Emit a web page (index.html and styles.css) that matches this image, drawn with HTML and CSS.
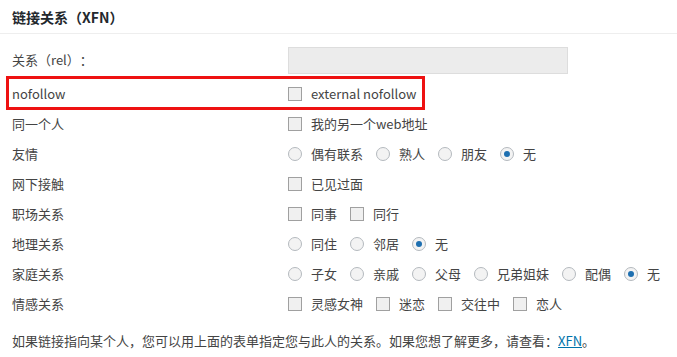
FILE: index.html
```html
<!DOCTYPE html>
<html lang="zh-CN">
<head>
<meta charset="utf-8">
<title>链接关系（XFN）</title>
<link rel="stylesheet" href="styles.css">
</head>
<body>
<div class="box">
  <h2 class="box-title">链接关系（XFN）</h2>
  <div class="box-body">
    <div class="row row-rel">
      <div class="label">关系（rel）：</div>
      <div class="ctrl"><input class="text-input" type="text" disabled></div>
    </div>
    <div class="row row-hl">
      <span class="highlight"></span>
      <div class="label">nofollow</div>
      <div class="ctrl"><label class="opt"><span class="cb"></span>external nofollow</label></div>
    </div>
    <div class="row">
      <div class="label">同一个人</div>
      <div class="ctrl"><label class="opt"><span class="cb"></span>我的另一个web地址</label></div>
    </div>
    <div class="row">
      <div class="label">友情</div>
      <div class="ctrl">
        <label class="opt"><span class="rb"></span>偶有联系</label>
        <label class="opt"><span class="rb"></span>熟人</label>
        <label class="opt"><span class="rb"></span>朋友</label>
        <label class="opt"><span class="rb on"></span>无</label>
      </div>
    </div>
    <div class="row">
      <div class="label">网下接触</div>
      <div class="ctrl"><label class="opt"><span class="cb"></span>已见过面</label></div>
    </div>
    <div class="row">
      <div class="label">职场关系</div>
      <div class="ctrl">
        <label class="opt"><span class="cb"></span>同事</label>
        <label class="opt"><span class="cb"></span>同行</label>
      </div>
    </div>
    <div class="row">
      <div class="label">地理关系</div>
      <div class="ctrl">
        <label class="opt"><span class="rb"></span>同住</label>
        <label class="opt"><span class="rb"></span>邻居</label>
        <label class="opt"><span class="rb on"></span>无</label>
      </div>
    </div>
    <div class="row">
      <div class="label">家庭关系</div>
      <div class="ctrl">
        <label class="opt"><span class="rb"></span>子女</label>
        <label class="opt"><span class="rb"></span>亲戚</label>
        <label class="opt"><span class="rb"></span>父母</label>
        <label class="opt"><span class="rb"></span>兄弟姐妹</label>
        <label class="opt"><span class="rb"></span>配偶</label>
        <label class="opt"><span class="rb on"></span>无</label>
      </div>
    </div>
    <div class="row">
      <div class="label">情感关系</div>
      <div class="ctrl">
        <label class="opt"><span class="cb"></span>灵感女神</label>
        <label class="opt"><span class="cb"></span>迷恋</label>
        <label class="opt"><span class="cb"></span>交往中</label>
        <label class="opt"><span class="cb"></span>恋人</label>
      </div>
    </div>
    <p class="note">如果链接指向某个人，您可以用上面的表单指定您与此人的关系。如果您想了解更多，请查看：<a href="#">XFN</a>。</p>
  </div>
</div>
</body>
</html>
```
FILE: styles.css
```css
html, body {
  margin: 0;
  padding: 0;
  background: #fff;
}
body {
  font-family: "Noto Sans CJK SC", "Noto Sans", sans-serif;
  font-size: 13px;
  color: #444;
  text-spacing-trim: space-all;
  white-space: nowrap;
}
.box {
  width: 677px;
}
.box-title {
  margin: 0;
  height: 34px;
  box-sizing: border-box;
  padding: 7px 12px 0;
  font-size: 14px;
  font-weight: bold;
  line-height: 20px;
  color: #23282d;
  border-bottom: 1px solid #eee;
}
.box-body {
  padding: 12px 0 0 12px;
}
.row {
  display: flex;
  align-items: center;
  height: 30px;
  position: relative;
}
.row-rel {
  height: 28px;
  margin-bottom: 5px;
}
.label {
  width: 276px;
  flex: none;
  line-height: 18px;
}
.ctrl {
  display: flex;
  align-items: center;
  flex: none;
}
.text-input {
  width: 280px;
  height: 27px;
  box-sizing: border-box;
  margin: 0;
  border: 1px solid #ddd;
  background: #ececec;
}
.opt {
  display: flex;
  align-items: center;
  flex: none;
  margin-right: 13px;
  line-height: 18px;
}
.cb, .rb {
  width: 12px;
  height: 12px;
  border: 1px solid #a0a0a0;
  background: #f0f0f0;
  margin-right: 9px;
  flex: none;
  box-sizing: content-box;
}
.rb {
  border-radius: 50%;
  border-color: #b4b9be;
  background: #f3f3f3;
  position: relative;
}
.rb.on::after {
  content: "";
  position: absolute;
  left: 3px;
  top: 3px;
  width: 6px;
  height: 6px;
  border-radius: 50%;
  background: #1e6fb0;
}
.highlight {
  position: absolute;
  left: -6px;
  top: -3px;
  width: 413px;
  height: 28px;
  border: 3px solid #e11;
  pointer-events: none;
}
.note {
  margin: 12px 0 0;
  line-height: 20px;
}
.note a {
  color: #0073aa;
  text-decoration: underline;
}
```
